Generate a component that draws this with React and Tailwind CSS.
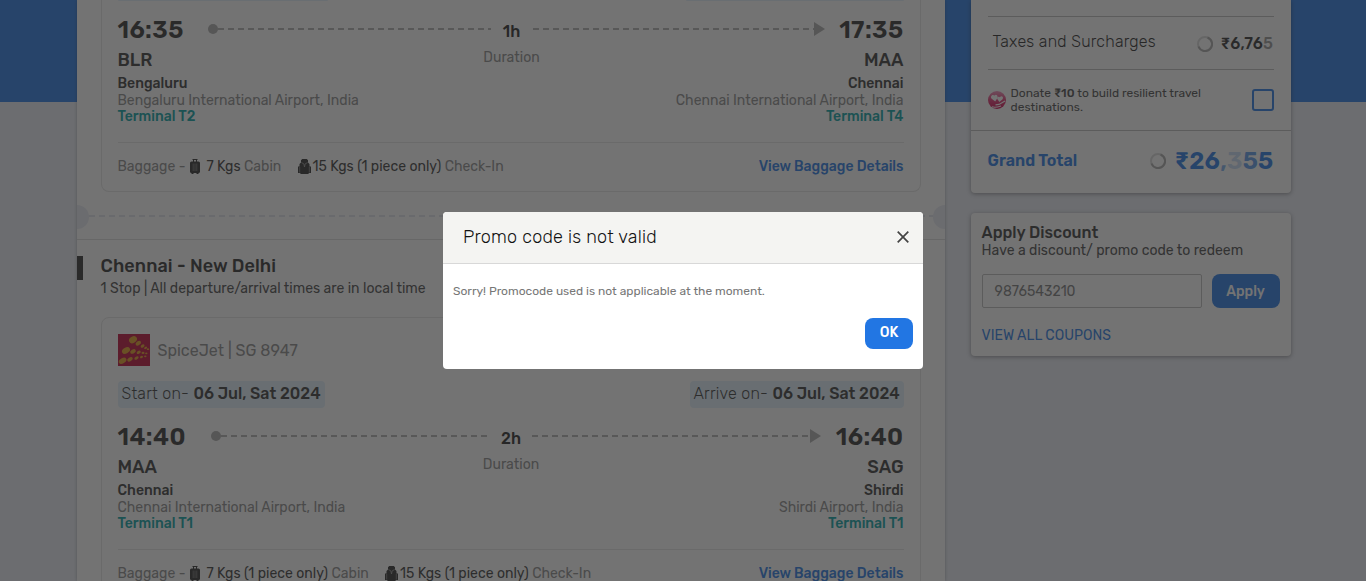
import React from "react";

const Suitcase = () => (
  <svg width="10" height="15" viewBox="0 0 10 15" className="shrink-0">
    <path d="M2.5 0h5v1H7v2H6V1H4v2H3V1h-.5z" fill="#262626" />
    <rect x="0" y="2.5" width="10" height="11.5" rx="1.5" fill="#262626" />
    <path d="M3.2 4.500v7.500M5 4.500v7.500M6.800 4.500v7.500" stroke="#999" strokeWidth="0.6" />
    <path d="M1.500 14h2v1h-2zM6.500 14h2v1h-2z" fill="#262626" />
  </svg>
);

const Backpack = () => (
  <svg width="13" height="15" viewBox="0 0 13 15" className="shrink-0">
    <path d="M4.200 0h4.600L10 1.200v2.300L11.500 5v2.500H13V14h-2l-.8 1H2.800L2 14H0V7.500h1.500V5L3 3.500V1.200z" fill="#262626" />
    <path d="M3.400 3.600 5.800 4.800 6.500 8l.7-3.200 2.400-1.200" fill="none" stroke="#999" strokeWidth="0.8" />
    <path d="M1.700 8v5.500M11.300 8v5.500" stroke="#aaa" strokeWidth="0.6" />
  </svg>
);

const AirlineLogo = () => (
  <svg width="32" height="32" viewBox="0 0 32 32" className="shrink-0">
    <rect width="32" height="32" fill="#bb0030" />
    <g fill="#e09a1c">
      <ellipse cx="15" cy="5.7" rx="4.2" ry="3.2" transform="rotate(-30 15 5.7)" />
      <ellipse cx="20.3" cy="9.2" rx="3" ry="2" transform="rotate(-35 20.3 9.2)" />
      <ellipse cx="24.6" cy="12" rx="2.1" ry="1.4" transform="rotate(-35 24.6 12)" />
      <ellipse cx="27.6" cy="13.8" rx="1.6" ry="1.1" transform="rotate(-35 27.6 13.8)" />
      <ellipse cx="30" cy="15.2" rx="1.2" ry="0.9" />
      <ellipse cx="8" cy="16.5" rx="4.3" ry="2.9" transform="rotate(-30 8 16.5)" />
      <ellipse cx="15" cy="17.4" rx="3" ry="2" transform="rotate(-30 15 17.4)" />
      <ellipse cx="20.7" cy="18.3" rx="2.2" ry="1.5" transform="rotate(-30 20.7 18.3)" />
      <ellipse cx="25" cy="18.9" rx="1.5" ry="1.1" />
      <ellipse cx="28.3" cy="19.3" rx="1.2" ry="0.9" />
      <ellipse cx="4.6" cy="26.8" rx="4.1" ry="2.6" transform="rotate(-30 4.6 26.8)" />
      <ellipse cx="12" cy="25.3" rx="3" ry="1.9" transform="rotate(-30 12 25.3)" />
      <ellipse cx="18.5" cy="24" rx="2.3" ry="1.4" transform="rotate(-30 18.5 24)" />
      <ellipse cx="23.5" cy="23" rx="1.6" ry="1.1" transform="rotate(-30 23.5 23)" />
      <ellipse cx="27.3" cy="22.3" rx="1.2" ry="0.9" />
    </g>
  </svg>
);

const DonateIcon = () => (
  <svg width="18" height="18" viewBox="0 0 18 18" className="shrink-0">
    <defs>
      <linearGradient id="heartBg" x1="0" y1="0" x2="0" y2="1">
        <stop offset="0" stopColor="#f08cb8" />
        <stop offset="0.5" stopColor="#e0306f" />
        <stop offset="1" stopColor="#d0004a" />
      </linearGradient>
    </defs>
    <circle cx="9" cy="9" r="9" fill="url(#heartBg)" />
    <path d="M7.200 10.600 3.400 7.400C2 5.400 4.400 2.800 6.600 4.600 8 2.800 10 4.600 9.600 6.700z" fill="#fff" />
    <path d="M11.400 11 9.300 8c-.7-1.800 1-3 2.500-1.800C13.400 4.300 16 5.800 14.600 8.300z" fill="#fff" />
    <path d="M7.500 13.800 11 13.400 17 10M3.800 15.800c3 1 6 .3 9.200-.8" fill="none" stroke="#fff" strokeWidth="1.200" />
  </svg>
);

const Spinner = () => (
  <svg width="16" height="16" viewBox="0 0 16 16" className="shrink-0">
    <circle cx="8" cy="8" r="7" fill="none" stroke="#d9d9d9" strokeWidth="2" />
    <path d="M10.500 1.500A7 7 0 1 1 1.500 10.500" fill="none" stroke="#a8a8a8" strokeWidth="2" />
  </svg>
);

const Dashes = () => (
  <div className="h-0.5 flex-1 bg-[repeating-linear-gradient(90deg,#b0b0b0_0_6px,transparent_6px_10px)]" />
);

function Route({ duration, leftClass }) {
  return (
    <div className="flex flex-1 items-start">
      <div className={`flex h-2.5 items-center ${leftClass}`}>
        <div className="size-2.5 rounded-full bg-[#aaa]" />
        <Dashes />
      </div>
      <div className="flex w-[42px] flex-col items-center whitespace-nowrap">
        <span className="mt-[-2px] text-[16px] font-medium leading-[20px] text-[#222]">{duration}</span>
        <span className="mt-[8px] text-[14px] leading-[16px] text-[#888]">Duration</span>
      </div>
      <div className="flex h-2.5 flex-1 items-center">
        <Dashes />
        <svg width="11" height="14" viewBox="0 0 11 14">
          <path d="M0 0 11 7 0 14z" fill="#aaa" />
        </svg>
      </div>
    </div>
  );
}

function Airport({ code, city, name, terminal, right }) {
  return (
    <div className={`flex flex-col whitespace-nowrap ${right ? "items-end" : "items-start"}`}>
      <span className="text-[18px] font-medium leading-[22px] text-[#333]">{code}</span>
      <span className="mt-[4px] text-[14px] font-medium leading-[17px] text-[#333]">{city}</span>
      <span className="text-[14px] leading-[17px] text-[#888]">{name}</span>
      <span className="text-[14px] font-medium leading-[16px] text-[#009ea2]">{terminal}</span>
    </div>
  );
}

function Flight({ f }) {
  return (
    <>
      <div className="flex h-[40px] justify-between pt-[6px]">
        <span className={`text-[24px] font-semibold leading-[32px] tracking-[0.4px] text-[#2b2b2b] ${f.timeClass}`}>{f.start}</span>
        <div className={`flex flex-1 pt-[10px] ${f.routeClass}`}>
          <Route duration={f.duration} leftClass={f.leftClass} />
        </div>
        <span className={`flex justify-end text-[24px] font-semibold leading-[32px] tracking-[0.4px] text-[#2b2b2b] ${f.timeClass}`}>{f.end}</span>
      </div>
      <div className="flex h-[86px] justify-between pt-[1px]">
        <Airport {...f.from} />
        <Airport {...f.to} right />
      </div>
      <div className="mt-[8px] flex h-[50px] items-center whitespace-nowrap border-t border-[#e3e3e3] pb-[2px] text-[14px] text-[#888]">
        <span className="w-[72px]">Baggage -</span>
        <Suitcase />
        <span className={`ml-[7px] ${f.cabinClass}`}>
          <span className="text-[#333]">{f.cabin}</span> Cabin
        </span>
        <Backpack />
        <span className="ml-[2px]">
          <span className="text-[#333]">15 Kgs (1 piece only)</span> Check-In
        </span>
        <span className="ml-auto font-medium text-[#2276e3]">View Baggage Details</span>
      </div>
    </>
  );
}

const flights = [
  {
    start: "16:35", end: "17:35", duration: "1h", cabin: "7 Kgs",
    timeClass: "w-[66px]", routeClass: "ml-[24.5px] mr-[13px]", leftClass: "w-[282.5px]", cabinClass: "w-[91px]",
    from: { code: "BLR", city: "Bengaluru", name: "Bengaluru International Airport, India", terminal: "Terminal T2" },
    to: { code: "MAA", city: "Chennai", name: "Chennai International Airport, India", terminal: "Terminal T4" },
  },
  {
    start: "14:40", end: "16:40", duration: "2h", cabin: "7 Kgs (1 piece only)",
    timeClass: "w-[68px]", routeClass: "ml-[25.5px] mr-[15px]", leftClass: "w-[279px]", cabinClass: "w-[178.5px]",
    from: { code: "MAA", city: "Chennai", name: "Chennai International Airport, India", terminal: "Terminal T1" },
    to: { code: "SAG", city: "Shirdi", name: "Shirdi Airport, India", terminal: "Terminal T1" },
  },
];

function Itinerary() {
  return (
    <div className="h-[581px] w-[868.5px] overflow-hidden bg-white shadow-[0_0_3px_rgba(0,0,0,0.3)]">
      <div className="ml-[24px] h-[192px] w-[820px] rounded-b-lg border border-t-0 border-[#e3e3e3] px-4">
        <div className="flex h-px justify-between">
          <div className="w-[210px] rounded-b bg-[#e2f1fb]" />
          <div className="w-[218px] rounded-b bg-[#e2f1fb]" />
        </div>
        <div className="mt-[7px]">
          <Flight f={flights[0]} />
        </div>
      </div>
      <div className="flex h-[48px] items-center border-b border-[#dcdcdc]">
        <div className="mt-[2px] h-6 w-3 rounded-r-full bg-[#e6e9f3]" />
        <div className="h-0.5 flex-1 bg-[repeating-linear-gradient(90deg,#e2e4ee_0_6px,transparent_6px_10px)]" />
        <div className="mt-[2px] h-6 w-3 rounded-l-full bg-[#e6e9f3]" />
      </div>
      <div className="mt-4 flex">
        <div className="h-6 w-[6px] bg-[#2b2b2b]" />
        <div className="ml-[18px] flex flex-col whitespace-nowrap">
          <h2 className="text-[18px] font-medium leading-[21px] tracking-[0.1px] text-[#2b2b2b]">Chennai - New Delhi</h2>
          <p className="mt-[3px] text-[14px] leading-[17px] text-[#444]">1 Stop | All departure/arrival times are in local time</p>
        </div>
      </div>
      <div className="ml-[24px] mt-5 h-[282px] w-[820px] rounded-lg border border-[#e3e3e3] px-4 pt-4">
        <div className="flex items-center">
          <AirlineLogo />
          <span className="ml-[8px] pt-[2px] text-[16px] text-[#888]">SpiceJet | SG 8947</span>
        </div>
        <div className="mt-[15px] flex h-[27px] justify-between whitespace-nowrap text-[16px] leading-[26px] text-[#333]">
          <div className="w-[207px] rounded bg-[#e2f1fb] pl-1">
            <span className="font-light tracking-[0.22px]">Start on- </span><b className="font-medium">06 Jul, Sat 2024</b>
          </div>
          <div className="w-[214px] rounded bg-[#e2f1fb] pl-1">
            <span className="font-light tracking-[0.22px]">Arrive on- </span><b className="font-medium">06 Jul, Sat 2024</b>
          </div>
        </div>
        <div className="mt-[7px]">
          <Flight f={flights[1]} />
        </div>
      </div>
    </div>
  );
}

function Fare() {
  return (
    <div className="h-[192.5px] rounded-b bg-white shadow-[0_1px_4px_rgba(0,0,0,0.4)]">
      <div className="mx-[17px] flex h-[70px] pt-[16px]">
        <div className="flex flex-1 items-center justify-between border-y border-[#bbb] pl-[5px]">
          <span className="pb-[3px] text-[16px] font-light tracking-[0.24px] text-[#222]">Taxes and Surcharges</span>
          <div className="flex items-center pt-[2px] text-[16px] font-medium tracking-[0.15px] text-[#2b2b2b]">
            <Spinner />
            <span className="ml-2 w-[53px]">₹6,76<span className="opacity-50">5</span></span>
          </div>
        </div>
      </div>
      <div className="flex h-[61px] items-center border-b border-[#bbb] px-[17px]">
        <DonateIcon />
        <p className="ml-[5px] flex-1 text-[12px] leading-[14px] text-[#444]">
          Donate <b className="font-medium">₹10</b> to build resilient travel<br />destinations.
        </p>
        <div className="size-[22px] rounded-[3px] border-2 border-[#2276e3]" />
      </div>
      <div className="flex h-[60px] items-center px-[17px] text-[#2276e3]">
        <span className="flex-1 text-[16px] font-semibold">Grand Total</span>
        <Spinner />
        <span className="ml-[9px] w-[99px] text-[24px] font-semibold tracking-[0.25px]">₹26<span className="opacity-60">,</span><span className="opacity-25">3</span><span className="opacity-75">5</span>5</span>
      </div>
    </div>
  );
}

function Discount() {
  return (
    <div className="mt-[20.5px] h-[143px] rounded bg-white px-[11px] pt-[10px] shadow-[0_1px_4px_rgba(0,0,0,0.4)]">
      <h3 className="text-[16px] font-medium leading-[20px] text-[#333]">Apply Discount</h3>
      <p className="whitespace-nowrap text-[14px] leading-[16px] text-[#444]">Have a discount/ promo code to redeem</p>
      <div className="mt-[15px] flex h-[34px] justify-between">
        <div className="flex w-[220px] items-center rounded-[2px] border border-[#bbb] pl-3 text-[14px] text-[#777]">9876543210</div>
        <button className="w-[68px] rounded-lg bg-[#2276e3] text-[14px] font-medium text-white">Apply</button>
      </div>
      <a className="mt-[18px] block text-[14px] leading-[20px] text-[#2276e3]">VIEW ALL COUPONS</a>
    </div>
  );
}

function Modal() {
  return (
    <div className="absolute inset-0 flex items-start justify-center bg-[rgba(42,42,42,0.66)] pt-[212px]">
      <div className="h-[157px] w-[480px] overflow-hidden rounded-[4px] bg-white">
        <div className="flex h-[52px] items-center justify-between border-b border-[#d8d8d8] bg-[#f4f4f2] pl-5 pr-[14px]">
          <h1 className="text-[18px] font-light tracking-[0.23px] text-[#111]">Promo code is not valid</h1>
          <svg width="12" height="12" viewBox="0 0 12 12" className="mb-px">
            <path d="M.7.7l10.600 10.600M11.300.7.7 11.300" stroke="#444" strokeWidth="1.700" />
          </svg>
        </div>
        <p className="ml-[10px] mt-[19px] text-[12px] leading-[16px] text-[#777]">Sorry! Promocode used is not applicable at the moment.</p>
        <div className="mr-[10px] mt-[19px] flex justify-end">
          <button className="h-[31px] w-12 rounded-lg bg-[#2276e3] pb-[2px] text-[14px] font-medium text-white">OK</button>
        </div>
      </div>
    </div>
  );
}

export default function App() {
  return (
    <div className="relative h-[581px] w-[1366px] overflow-hidden bg-[linear-gradient(#2276e3_102px,#e9ecf5_102px)] font-['Rubik','Roboto',sans-serif]">
      <div className="flex pl-[76.5px]">
        <Itinerary />
        <div className="ml-[25.6px] w-[320px]">
          <Fare />
          <Discount />
        </div>
      </div>
      <Modal />
    </div>
  );
}
